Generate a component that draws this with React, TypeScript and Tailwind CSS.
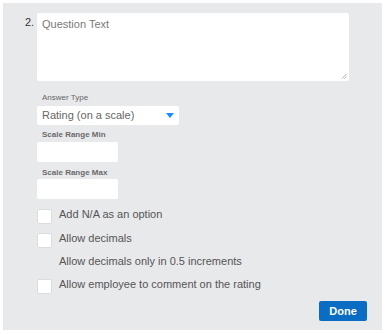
import React from "react";

function Checkbox() {
  return <div className="w-[15px] h-[15px] bg-white rounded-[2px] border border-[#dcdcdc] shrink-0" />;
}

export default function App() {
  return (
    <div className="w-[386px] h-[334px] bg-white p-[3px] pb-[4px] pr-[4px] font-['Liberation_Sans',Arial,sans-serif]">
      <div className="w-full h-full bg-[#e8e9eb] relative">
        <div className="flex pt-[10px] pl-[22px]">
          <div className="text-[11px] text-[#333] w-[12px] pt-[4px] leading-none">2.</div>
          <div className="relative w-[312px] h-[68px] bg-white rounded-[2px]">
            <div className="pl-[5px] pt-[3px] text-[11px] text-[#7a7a7a]">Question Text</div>
            <svg className="absolute right-[2px] bottom-[2px]" width="6" height="6" viewBox="0 0 6 6">
              <path d="M1 5.5 L5.5 1 M3.5 5.5 L5.5 3.5" stroke="#999" strokeWidth="0.8" />
            </svg>
          </div>
        </div>
        <div className="pl-[34px]">
          <div className="mt-[12px] pl-[5px] text-[8px] text-[#666] leading-[10px]">Answer Type</div>
          <div className="mt-[3px] w-[142px] h-[19px] bg-white rounded-[2px] flex items-center justify-between pl-[5px] pr-[5px]">
            <span className="text-[11px] text-[#666]">Rating (on a scale)</span>
            <svg width="8" height="5" viewBox="0 0 8 5"><path d="M0 0 L8 0 L4 5 Z" fill="#1a8cff" /></svg>
          </div>
          <div className="mt-[5px] pl-[5px] text-[8px] text-[#6b6b6b] leading-[10px] font-semibold">Scale Range Min</div>
          <div className="mt-[2px] w-[81px] h-[20px] bg-white rounded-[2px]" />
          <div className="mt-[6px] pl-[5px] text-[8px] text-[#6b6b6b] leading-[10px] font-semibold">Scale Range Max</div>
          <div className="mt-[1px] w-[81px] h-[20px] bg-white rounded-[2px]" />
          <div className="mt-[10px] flex items-center gap-[7px]">
            <Checkbox />
            <span className="text-[11px] text-[#555] leading-none -mt-[4px]">Add N/A as an option</span>
          </div>
          <div className="mt-[9px] flex items-center gap-[7px]">
            <Checkbox />
            <span className="text-[11px] text-[#555] leading-none -mt-[5px]">Allow decimals</span>
          </div>
          <div className="mt-[8px] pl-[22px] text-[11px] text-[#555] leading-none">Allow decimals only in 0.5 increments</div>
          <div className="mt-[12px] flex items-center gap-[7px]">
            <Checkbox />
            <span className="text-[11px] text-[#555] leading-none -mt-[5px]">Allow employee to comment on the rating</span>
          </div>
        </div>
        <div className="flex justify-end pr-[15px] mt-[7px]">
          <button className="w-[48px] h-[20px] bg-[#0a6cc2] rounded-[2px] text-white text-[11px] font-bold">Done</button>
        </div>
      </div>
    </div>
  );
}
